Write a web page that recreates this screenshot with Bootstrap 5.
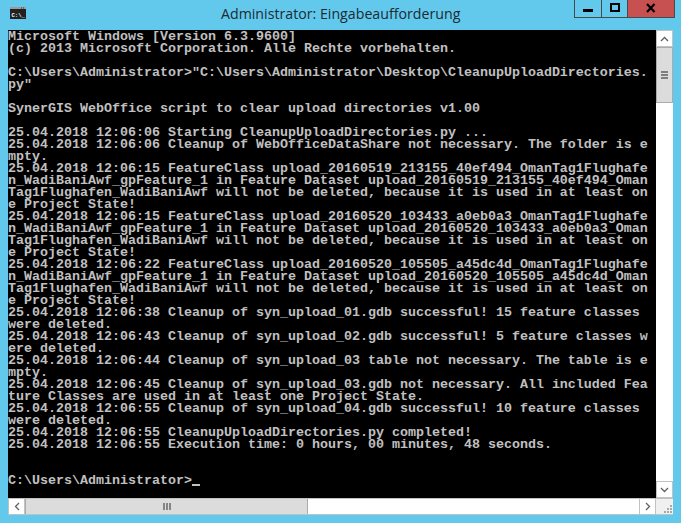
<!DOCTYPE html>
<html lang="de">
<head>
<meta charset="utf-8">
<title>Administrator: Eingabeaufforderung</title>
<link href="https://cdn.jsdelivr.net/npm/bootstrap@5.3.0/dist/css/bootstrap.min.css" rel="stylesheet">
<style>
html, body { height: 100%; }
body { background: #62c9ec; overflow: hidden; }
.win-shell { width: 665px; padding-left: 8px; box-sizing: content-box; }
.title-bar { height: 30px; }
.title-icon { width: 16px; height: 12px; margin-left: 2px; margin-top: 7px; display: block; }
.title-text { font-family: "Open Sans", sans-serif; font-size: 14.2px; line-height: 27px; color: #1c2a33; margin-left: 195px; white-space: nowrap; }
.caption-btns { height: 18px; margin-left: auto; margin-right: -2px; border: 1px solid #4a4a4a; border-top: 0; width: 101px; }
.cap-btn { height: 17px; }
.cap-min { width: 27px; border-right: 1px solid #4a4a4a; }
.cap-max { width: 26px; border-right: 1px solid #4a4a4a; }
.cap-close { width: 46px; background: #c75050; }
.term-screen { width: 648px; height: 468px; background: #000; }
.term-text { margin: 0; padding: 1px 0 0; font-family: "Liberation Mono", monospace; font-weight: 700; font-size: 13.33px; line-height: 12px; color: #c0c0c0; white-space: pre; overflow: visible; height: 468px; }
.term-cursor { display: inline-block; width: 8px; height: 2px; background: #c0c0c0; vertical-align: -2px; }
.vscroll { width: 17px; height: 468px; background: #fff; }
.sb-btn { background: #fff; border: 1px solid #c2c2c2; flex: none; }
.sb-btn-v { height: 17px; width: 17px; }
.sb-btn-h { width: 17px; height: 17px; }
.v-thumb { height: 56px; background: #dcdcdc; border: 1px solid #ababab; flex: none; }
.hscroll { width: 648px; height: 17px; background: #fff; border-bottom: 1px solid #c2c2c2; border-top: 1px solid #c2c2c2; }
.h-thumb { width: 283px; background: #dcdcdc; border: 1px solid #ababab; border-width: 0 1px; flex: none; }
.sb-corner { width: 17px; height: 17px; background: #f0f0f0; border-top: 1px solid #c2c2c2; border-bottom: 1px solid #c2c2c2; }
</style>
</head>
<body class="m-0">
<div class="win-shell d-flex flex-column">
  <div class="title-bar d-flex align-items-start">
    <svg class="title-icon flex-none" viewBox="0 0 16 12" aria-hidden="true">
      <rect width="16" height="12" fill="#222"/>
      <rect x="0" y="0" width="16" height="2" fill="#9a9a9a"/>
      <rect x="11" y="0.5" width="1" height="1" fill="#333"/><rect x="13" y="0.5" width="1" height="1" fill="#333"/>
      <text x="1.5" y="9.5" font-family="Liberation Mono" font-weight="700" font-size="5.6" fill="#fff">C:\_</text>
    </svg>
    <div class="title-text">Administrator: Eingabeaufforderung</div>
    <div class="caption-btns d-flex">
      <div class="cap-btn cap-min d-flex align-items-center justify-content-center">
        <svg width="11" height="17" viewBox="0 0 11 17"><rect x="0" y="9" width="10" height="3" fill="#000"/></svg>
      </div>
      <div class="cap-btn cap-max d-flex align-items-center justify-content-center">
        <svg width="10" height="17" viewBox="0 0 10 17"><rect x="1" y="4" width="8" height="7" fill="none" stroke="#000" stroke-width="2"/></svg>
      </div>
      <div class="cap-btn cap-close d-flex align-items-center justify-content-center">
        <svg width="10" height="17" viewBox="0 0 10 17"><path d="M1 4 L8.5 12 M8.5 4 L1 12" stroke="#000" stroke-width="2.2" fill="none"/></svg>
      </div>
    </div>
  </div>
  <div class="d-flex">
    <div class="term-screen">
<pre class="term-text">Microsoft Windows [Version 6.3.9600]
(c) 2013 Microsoft Corporation. Alle Rechte vorbehalten.

C:\Users\Administrator&gt;"C:\Users\Administrator\Desktop\CleanupUploadDirectories.
py"

SynerGIS WebOffice script to clear upload directories v1.00

25.04.2018 12:06:06 Starting CleanupUploadDirectories.py ...
25.04.2018 12:06:06 Cleanup of WebOfficeDataShare not necessary. The folder is e
mpty.
25.04.2018 12:06:15 FeatureClass upload_20160519_213155_40ef494_OmanTag1Flughafe
n_WadiBaniAwf_gpFeature_1 in Feature Dataset upload_20160519_213155_40ef494_Oman
Tag1Flughafen_WadiBaniAwf will not be deleted, because it is used in at least on
e Project State!
25.04.2018 12:06:15 FeatureClass upload_20160520_103433_a0eb0a3_OmanTag1Flughafe
n_WadiBaniAwf_gpFeature_1 in Feature Dataset upload_20160520_103433_a0eb0a3_Oman
Tag1Flughafen_WadiBaniAwf will not be deleted, because it is used in at least on
e Project State!
25.04.2018 12:06:22 FeatureClass upload_20160520_105505_a45dc4d_OmanTag1Flughafe
n_WadiBaniAwf_gpFeature_1 in Feature Dataset upload_20160520_105505_a45dc4d_Oman
Tag1Flughafen_WadiBaniAwf will not be deleted, because it is used in at least on
e Project State!
25.04.2018 12:06:38 Cleanup of syn_upload_01.gdb successful! 15 feature classes
were deleted.
25.04.2018 12:06:43 Cleanup of syn_upload_02.gdb successful! 5 feature classes w
ere deleted.
25.04.2018 12:06:44 Cleanup of syn_upload_03 table not necessary. The table is e
mpty.
25.04.2018 12:06:45 Cleanup of syn_upload_03.gdb not necessary. All included Fea
ture Classes are used in at least one Project State.
25.04.2018 12:06:55 Cleanup of syn_upload_04.gdb successful! 10 feature classes
were deleted.
25.04.2018 12:06:55 CleanupUploadDirectories.py completed!
25.04.2018 12:06:55 Execution time: 0 hours, 00 minutes, 48 seconds.


C:\Users\Administrator&gt;<span class="term-cursor"></span></pre>
    </div>
    <div class="vscroll d-flex flex-column">
      <div class="sb-btn sb-btn-v d-flex align-items-center justify-content-center">
        <svg width="9" height="6" viewBox="0 0 9 6"><path d="M1 5 L4.5 1.5 L8 5" fill="none" stroke="#606060" stroke-width="1.3"/></svg>
      </div>
      <div class="v-thumb d-flex align-items-center justify-content-center">
        <svg width="8" height="8" viewBox="0 0 8 8"><path d="M0 1H7M0 4H7M0 7H7" stroke="#606060" stroke-width="1.4"/></svg>
      </div>
      <div class="flex-grow-1"></div>
      <div class="sb-btn sb-btn-v d-flex align-items-center justify-content-center">
        <svg width="9" height="6" viewBox="0 0 9 6"><path d="M1 1 L4.5 4.5 L8 1" fill="none" stroke="#606060" stroke-width="1.3"/></svg>
      </div>
    </div>
  </div>
  <div class="d-flex">
    <div class="hscroll d-flex">
      <div class="sb-btn sb-btn-h d-flex align-items-center justify-content-center border-top-0 border-bottom-0 h-100">
        <svg width="6" height="9" viewBox="0 0 6 9"><path d="M5 1 L1.5 4.5 L5 8" fill="none" stroke="#606060" stroke-width="1.3"/></svg>
      </div>
      <div class="h-thumb d-flex align-items-center justify-content-center h-100">
        <svg width="8" height="8" viewBox="0 0 8 8"><path d="M1 0V7M4 0V7M7 0V7" stroke="#606060" stroke-width="1.4"/></svg>
      </div>
      <div class="flex-grow-1"></div>
      <div class="sb-btn sb-btn-h d-flex align-items-center justify-content-center border-top-0 border-bottom-0 h-100">
        <svg width="6" height="9" viewBox="0 0 6 9"><path d="M1 1 L4.5 4.5 L1 8" fill="none" stroke="#606060" stroke-width="1.3"/></svg>
      </div>
    </div>
    <div class="sb-corner d-flex align-items-end justify-content-end">
      <svg width="12" height="12" viewBox="0 0 12 12"><g fill="#a8a8a8"><rect x="9" y="3" width="2" height="2"/><rect x="6" y="6" width="2" height="2"/><rect x="9" y="6" width="2" height="2"/><rect x="3" y="9" width="2" height="2"/><rect x="6" y="9" width="2" height="2"/><rect x="9" y="9" width="2" height="2"/></g></svg>
    </div>
  </div>
</div>
<script src="https://cdn.jsdelivr.net/npm/bootstrap@5.3.0/dist/js/bootstrap.bundle.min.js"></script>
</body>
</html>
